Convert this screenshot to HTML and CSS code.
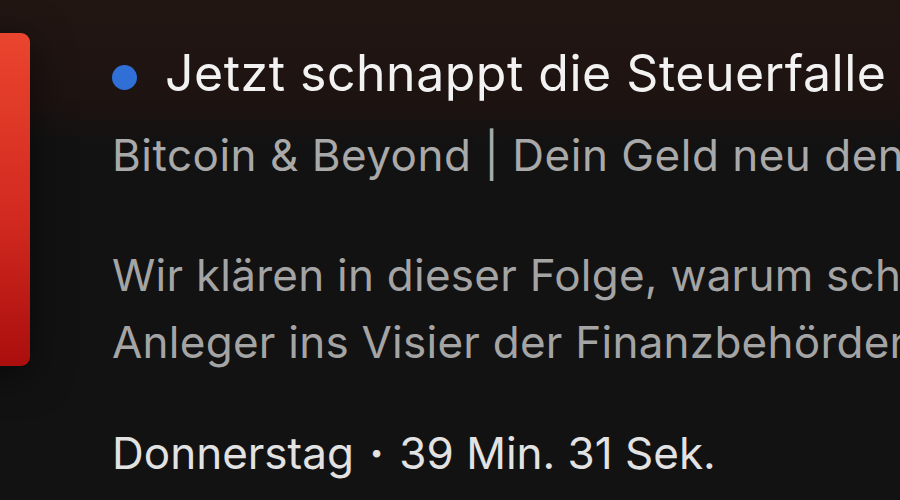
FILE: index.html
```html
<!DOCTYPE html>
<html lang="de">
<head>
    <meta charset="UTF-8">
    <meta name="viewport" content="width=device-width, initial-scale=1.0">
    <title>Jetzt schnappt die Steuerfalle zu</title>
    <link rel="stylesheet" href="styles.css">
</head>
<body>

<div class="episode">
    <!-- Cover -->
    <div class="cover"></div>

    <!-- Episode text -->
    <div class="info">
        <div class="title-row">
            <span class="new-dot"></span>
            <span class="title">Jetzt schnappt die Steuerfalle zu</span>
        </div>
        <div class="show">Bitcoin &amp; Beyond | Dein Geld neu denken</div>
        <p class="description">
            Wir klären in dieser Folge, warum schon bald viele Krypto-<br>
            Anleger ins Visier der Finanzbehörden geraten könnten
        </p>
        <div class="meta">Donnerstag <span class="sep">&middot;</span> 39 Min. 31 Sek.</div>
    </div>
</div>

</body>
</html>
```

FILE: styles.css
```css
body {
    margin: 0;
    padding: 0;
    width: 900px;
    height: 500px;
    overflow: hidden;
    background: linear-gradient(to bottom, #221613 0, #1d1311 100px, #131212 140px, #121212 100%);
    font-family: Inter, Lato, sans-serif;
}

.episode {
    display: flex;
    align-items: flex-start;
    padding-top: 33px;
}

.cover {
    flex: none;
    width: 333px;
    height: 333px;
    margin-left: -303px;
    border-radius: 9px;
    background: linear-gradient(to bottom, #ea452e, #d22a20 55%, #aa0e0d);
    box-shadow: 0 8px 40px rgba(0, 0, 0, 0.55);
}

.info {
    flex: 1;
    min-width: 0;
    padding-left: 82px;
    padding-top: 10px;
    overflow: hidden;
    white-space: nowrap;
}

.title-row {
    display: flex;
    align-items: center;
    gap: 28px;
    height: 60px;
}

.new-dot {
    flex: none;
    width: 25px;
    height: 25px;
    border-radius: 50%;
    background: #2f6fd6;
    margin-top: 8px;
}

.title {
    font-size: 50px;
    line-height: 60px;
    letter-spacing: 0.5px;
    color: #f2f2f2;
}

.show {
    margin-top: 19px;
    font-size: 44px;
    line-height: 66px;
    letter-spacing: 0.5px;
    color: #a9a9a9;
}

.description {
    margin: 54px 0 0;
    font-size: 44px;
    line-height: 67px;
    letter-spacing: 0.25px;
    color: #a4a4a4;
}

.meta {
    margin-top: 44px;
    font-size: 44px;
    line-height: 66px;
    color: #e2e2e2;
}

.sep {
    font-weight: 700;
    padding: 0 3px;
}
```
